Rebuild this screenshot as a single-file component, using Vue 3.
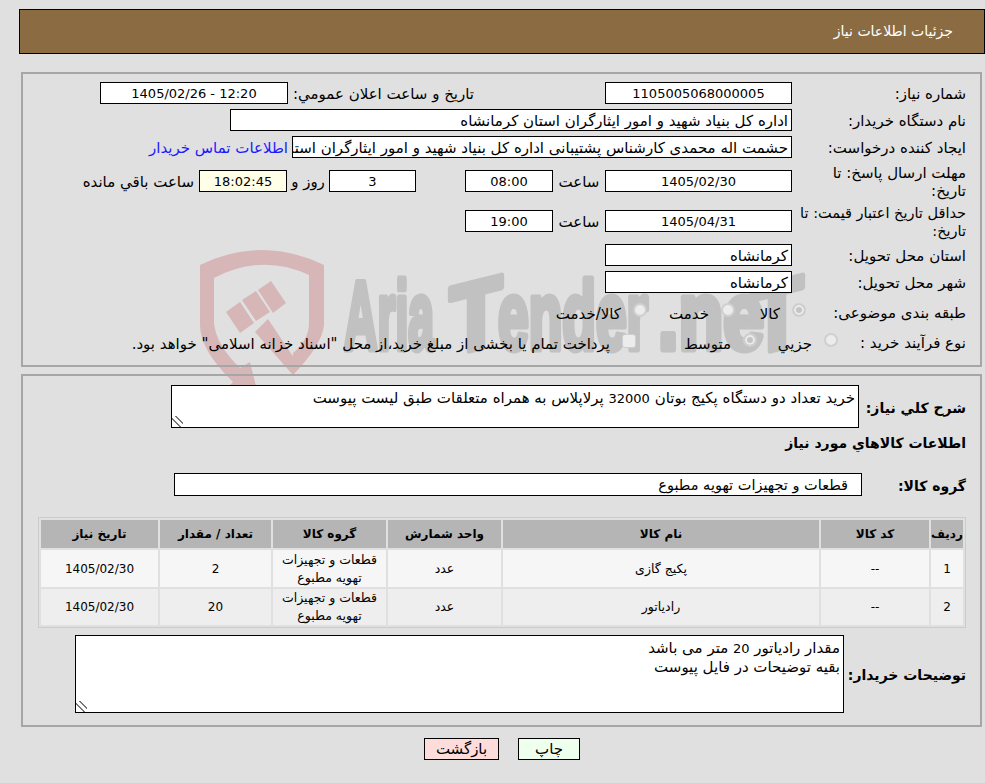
<template>
  <div class="page" dir="rtl">
    <!-- faded logo sits behind the form -->
    <svg class="watermark" width="985" height="400" viewBox="0 0 985 400">
      <g fill="#d7b6b7">
        <path fill-rule="evenodd" d="M200 20 Q262 -10 324 20 L324 80 Q322 100 293 130 L293 108 Q309 95 309 78 L309 30 Q262 8 214 33 L214 78 Q216 100 240 123 L250 117 L257 145 L230 140 L233 137 Q200 105 200 80 Z" />
        <path d="M226 67 L240 57 L254 78 L240 88 Z" />
        <path d="M242 55 L256 46 L270 67 L256 76 Z" />
        <path d="M258 45 L271 36 L286 58 L273 68 Z" />
        <path d="M268 74 L255 87 L293 130 L294 113 Z" />
      </g>
      <g class="wm-word" fill="#c1c1c1" stroke="#c1c1c1" stroke-width="7" stroke-linejoin="round">
        <text x="344" y="104" textLength="90" lengthAdjust="spacingAndGlyphs">Aria</text>
        <text transform="translate(450 110) skewY(-14)" textLength="52" lengthAdjust="spacingAndGlyphs">T</text>
        <text x="498" y="104" textLength="150" lengthAdjust="spacingAndGlyphs">ender</text>
        <text x="658" y="104" textLength="106" lengthAdjust="spacingAndGlyphs">.ne</text>
        <text transform="translate(751 110) skewY(-14)" textLength="52" lengthAdjust="spacingAndGlyphs">T</text>
      </g>
    </svg>

    <div class="title-bar">جزئیات اطلاعات نیاز</div>

    <section class="panel panel-top">
      <div class="row">
        <div class="label">شماره نیاز:</div>
        <div class="box center w-main">1105005068000005</div>
        <div class="label-inline public-label">تاریخ و ساعت اعلان عمومي:</div>
        <div class="box center w-side" dir="ltr">1405/02/26 - 12:20</div>
      </div>
      <div class="row row-tight">
        <div class="label">نام دستگاه خریدار:</div>
        <div class="box w-buyer">اداره کل بنیاد شهید و امور ایثارگران استان کرمانشاه</div>
      </div>
      <div class="row row-tight">
        <div class="label">ایجاد کننده درخواست:</div>
        <div class="box w-creator">حشمت اله محمدی کارشناس پشتیبانی اداره کل بنیاد شهید و امور ایثارگران استان کرمانشاه</div>
        <a class="contact" href="#">اطلاعات تماس خریدار</a>
      </div>
      <div class="row row-deadline">
        <div class="label">مهلت ارسال پاسخ: تا تاریخ:</div>
        <div class="box center w-main">1405/02/30</div>
        <div class="label-inline hour">ساعت</div>
        <div class="box center w-time">08:00</div>
        <div class="box center w-days">3</div>
        <div class="label-inline days-word">روز و</div>
        <div class="box center w-side-short remain">18:02:45</div>
        <div class="label-inline remain-word">ساعت باقي مانده</div>
      </div>
      <div class="row row-validity">
        <div class="label label-validity">حداقل تاریخ اعتبار قیمت: تا<br />تاریخ:</div>
        <div class="box center w-main">1405/04/31</div>
        <div class="label-inline hour">ساعت</div>
        <div class="box center w-time">19:00</div>
      </div>
      <div class="row row-province">
        <div class="label">استان محل تحویل:</div>
        <div class="box w-main">کرمانشاه</div>
      </div>
      <div class="row row-tight">
        <div class="label">شهر محل تحویل:</div>
        <div class="box w-main">کرمانشاه</div>
      </div>
      <div class="row row-category">
        <div class="label label-category">طبقه بندی موضوعی:</div>
        <div class="opt-cell w-71"><span class="radio checked"></span><span class="opt-text">کالا</span></div>
        <div class="opt-cell w-88"><span class="radio"></span><span class="opt-text">خدمت</span></div>
        <div class="opt-cell"><span class="radio"></span><span class="opt-text">کالا/خدمت</span></div>
      </div>
      <div class="row row-process">
        <div class="label label-process">نوع فرآیند خرید :</div>
        <div class="opt-cell w-81"><span class="radio"></span><span class="opt-text">جزيي</span></div>
        <div class="opt-cell w-121"><span class="radio checked"></span><span class="opt-text">متوسط</span></div>
        <div class="opt-cell"><span class="check"></span><span class="opt-text">پرداخت تمام یا بخشی از مبلغ خرید،از محل "اسناد خزانه اسلامی" خواهد بود.</span></div>
      </div>
    </section>

    <section class="panel panel-bottom">
      <div class="row row-summary">
        <div class="label strong label-summary">شرح كلي نياز:</div>
        <div class="area summary">خرید تعداد دو دستگاه پکیج بوتان <span class="num">32000</span> پرلاپلاس به همراه متعلقات طبق لیست پیوست</div>
      </div>
      <div class="heading">اطلاعات کالاهاي مورد نياز</div>
      <div class="row row-group">
        <div class="label strong label-group">گروه کالا:</div>
        <div class="box w-group">قطعات و تجهیزات تهویه مطبوع</div>
      </div>

      <table class="items">
        <colgroup>
          <col v-for="w in colWidths" :key="w.key" :style="{ width: w.width + 'px' }" />
        </colgroup>
        <thead>
          <tr>
            <th v-for="h in headers" :key="h">{{ h }}</th>
          </tr>
        </thead>
        <tbody>
          <tr v-for="item in items" :key="item.no">
            <td class="digits">{{ item.no }}</td>
            <td class="digits">--</td>
            <td>{{ item.name }}</td>
            <td>عدد</td>
            <td>قطعات و تجهیزات تهویه مطبوع</td>
            <td class="digits">{{ item.qty }}</td>
            <td class="digits">1405/02/30</td>
          </tr>
        </tbody>
      </table>

      <div class="row row-notes">
        <div class="label strong label-notes">توضیحات خریدار:</div>
        <div class="area notes">
          <div>مقدار رادیاتور <span class="num">20</span> متر می باشد</div>
          <div>بقیه توضیحات در فایل پیوست</div>
        </div>
      </div>
    </section>

    <div class="actions">
      <button class="btn btn-print" type="button">چاپ</button>
      <button class="btn btn-back" type="button">بازگشت</button>
    </div>
  </div>
</template>

<script setup>
const headers = ['ردیف', 'کد کالا', 'نام کالا', 'واحد شمارش', 'گروه کالا', 'تعداد / مقدار', 'تاریخ نیاز']

const colWidths = [32, 108, 316, 113, 113, 111, 117].map((width, key) => ({ width, key }))

const items = [
  { no: 1, name: 'پکیج گازی', qty: 2 },
  { no: 2, name: 'رادیاتور', qty: 20 }
]
</script>

<style>
html,
body {
  background: #e0e0e0;
}
</style>

<style scoped>
.page {
  position: relative;
  width: 985px;
  height: 783px;
  overflow: hidden;
  box-sizing: border-box;
  padding-top: 9px;
  background: #e0e0e0;
  color: #000;
  font-family: "DejaVu Sans", sans-serif;
  font-size: 15px;
}

.watermark {
  position: absolute;
  left: 0;
  top: 245px;
  z-index: 0;
  direction: ltr;
}

.wm-word {
  font-family: "Liberation Sans Narrow", "Liberation Sans", sans-serif;
  font-weight: 700;
  font-size: 96px;
}

.title-bar {
  box-sizing: border-box;
  height: 45px;
  margin-left: 19px;
  padding-right: 31px;
  border: 1px solid #000;
  background: #8b6b42;
  color: #fff;
  font-size: 14px;
  line-height: 43px;
}

.panel {
  position: relative;
  z-index: 1;
  box-sizing: border-box;
  width: 961px;
  margin-right: 3px;
  border: 2px solid #a6a6a6;
}

.panel-top {
  height: 295px;
  margin-top: 18px;
  padding-top: 8px;
}

.panel-bottom {
  height: 353px;
  margin-top: 7px;
  padding-top: 9px;
}

.row {
  display: flex;
  align-items: center;
  height: 22px;
}

.row-tight {
  margin-top: 5px;
}

.row-deadline {
  margin-top: 12px;
}

.row-validity {
  margin-top: 18px;
}

.row-province {
  margin-top: 12px;
}

.row-category {
  margin-top: 8px;
}

.row-process {
  margin-top: 8px;
}

.label {
  box-sizing: border-box;
  flex: none;
  width: 188px;
  padding-top: 2px;
  padding-right: 14px;
  padding-left: 6px;
  line-height: 18px;
}

.label-validity {
  padding-left: 0;
  font-size: 14.5px;
  white-space: nowrap;
}

.label-category {
  width: 174px;
  padding-left: 0;
}

.label-process {
  width: 142px;
  padding-left: 0;
}

.label-summary {
  width: 121px;
  padding-left: 0;
}

.label-group {
  width: 118px;
  padding-left: 0;
}

.label-notes {
  width: 136px;
  padding-left: 0;
  white-space: nowrap;
}

.strong {
  font-weight: 700;
  font-size: 14px;
}

.label-inline {
  flex: none;
  padding-top: 2px;
}

.public-label {
  box-sizing: border-box;
  width: 317px;
  padding-right: 131px;
  white-space: nowrap;
}

.hour {
  width: 52px;
  text-align: center;
}

.days-word {
  width: 42px;
  text-align: center;
}

.remain-word {
  margin-right: 5px;
}

.box {
  box-sizing: border-box;
  flex: none;
  height: 22px;
  padding: 0 3px;
  overflow: hidden;
  border: 1px solid #000;
  background: #fff;
  white-space: nowrap;
  line-height: 22px;
}

.center {
  font-size: 13px;
  text-align: center;
}

.num {
  font-size: 13px;
}

.w-main {
  width: 187px;
}

.w-side {
  width: 188px;
}

.w-buyer {
  width: 562px;
}

.w-creator {
  width: 500px;
}

.w-time {
  width: 88px;
}

.w-days {
  width: 87px;
  margin-right: 49px;
}

.w-side-short {
  width: 88px;
}

.w-group {
  width: 688px;
  height: 23px;
  padding-right: 13px;
  font-size: 14.5px;
}

.remain {
  background: #ffffe8;
}

.contact {
  margin-right: 4px;
  padding-top: 2px;
  color: #1a1aff;
  text-decoration: none;
  white-space: nowrap;
}

.opt-cell {
  display: flex;
  flex: none;
  align-items: center;
  gap: 12px;
  white-space: nowrap;
}

.opt-text {
  padding-top: 4px;
}

.w-71 {
  width: 71px;
}

.w-88 {
  width: 88px;
}

.w-81 {
  width: 81px;
}

.w-121 {
  width: 121px;
}

.radio {
  flex: none;
  box-sizing: border-box;
  width: 14px;
  height: 14px;
  margin-top: -4px;
  border: 2px solid #cfcfcf;
  border-radius: 50%;
  background: #ececec;
}

.radio.checked {
  background: #c4c4c4;
  box-shadow: inset 0 0 0 2px #ececec;
}

.check {
  flex: none;
  box-sizing: border-box;
  width: 14px;
  height: 14px;
  margin-top: -2px;
  border: 1px solid #cfcfcf;
  border-radius: 3px;
  background: #ececec;
}

.area {
  box-sizing: border-box;
  flex: none;
  padding: 3px 3px 2px;
  overflow: hidden;
  border: 1px solid #000;
  background: #fff;
  line-height: 18px;
  resize: both;
}

.area::-webkit-resizer {
  background: linear-gradient(45deg, transparent 32%, #777 32%, #777 44%, transparent 44%, transparent 60%, #777 60%, #777 72%, transparent 72%) left bottom / 11px 11px no-repeat;
}

.summary {
  width: 688px;
  height: 43px;
}

.row-summary {
  height: 43px;
}

.heading {
  margin-top: 6px;
  padding-right: 14px;
  font-weight: 700;
  font-size: 14px;
  line-height: 18px;
}

.row-group {
  height: 23px;
  margin-top: 21px;
}

.items {
  box-sizing: border-box;
  width: 928px;
  margin: 21px 14px 0 0;
  border: 1px solid #ccc;
  border-spacing: 2px;
  table-layout: fixed;
  text-align: center;
  font-size: 12.5px;
}

.items th {
  height: 28px;
  padding: 0;
  background: #b5b5b5;
  font-weight: 700;
  font-size: 12px;
}

.items td {
  height: 36px;
  padding: 0;
  background: #eee;
  line-height: 18px;
}

.items td.digits {
  font-size: 12px;
}

.items tbody tr:first-child td {
  height: 37px;
  background: #f6f6f6;
}

.row-notes {
  height: 78px;
  margin-top: 7px;
}

.notes {
  width: 769px;
  height: 78px;
}

.actions {
  position: relative;
  z-index: 1;
  display: flex;
  justify-content: center;
  gap: 19px;
  margin-top: 11px;
  padding-left: 19px;
}

.btn {
  box-sizing: border-box;
  height: 22px;
  padding: 0;
  border: 1px solid #000;
  border-radius: 0;
  color: #000;
  font: inherit;
}

.btn-print {
  width: 62px;
  background: #eeffee;
}

.btn-back {
  width: 75px;
  background: #ffdcdc;
}
</style>
